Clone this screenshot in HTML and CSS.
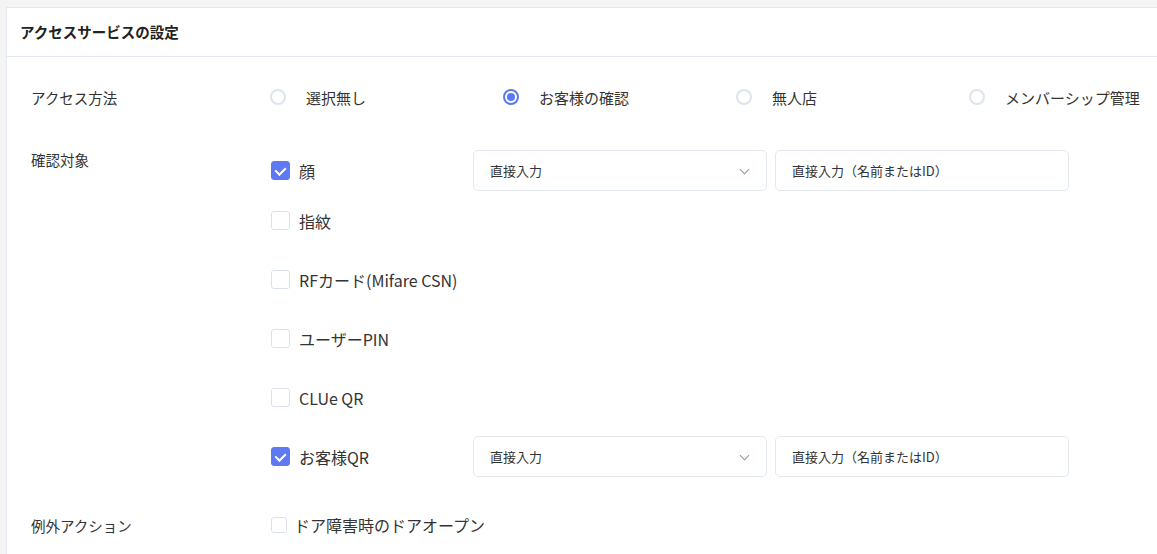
FILE: index.html
```html
<!DOCTYPE html>
<html lang="ja">
<head>
    <meta charset="UTF-8">
    <meta name="viewport" content="width=device-width, initial-scale=1.0">
    <title>アクセスサービスの設定</title>
    <link rel="stylesheet" href="styles.css">
</head>
<body>

    <!-- 設定カード -->
    <div class="card">
        <div class="card-header">アクセスサービスの設定</div>

        <div class="card-body">
            <!-- アクセス方法 -->
            <div class="form-row center first-row">
                <div class="row-label">アクセス方法</div>
                <div class="radio-group">
                    <label class="radio"><span class="radio-mark"></span>選択無し</label>
                    <label class="radio"><span class="radio-mark checked"></span>お客様の確認</label>
                    <label class="radio"><span class="radio-mark"></span>無人店</label>
                    <label class="radio"><span class="radio-mark"></span>メンバーシップ管理</label>
                </div>
            </div>

            <!-- 確認対象 -->
            <div class="form-row">
                <div class="row-label top">確認対象</div>
                <div class="check-list">
                    <div class="check-row first">
                        <label class="check"><span class="check-mark checked"></span>顔</label>
                        <div class="select-box">直接入力<span class="chevron"></span></div>
                        <div class="text-box">直接入力（名前またはID）</div>
                    </div>
                    <div class="check-row">
                        <label class="check"><span class="check-mark"></span>指紋</label>
                    </div>
                    <div class="check-row">
                        <label class="check"><span class="check-mark"></span>RFカード(Mifare CSN)</label>
                    </div>
                    <div class="check-row">
                        <label class="check"><span class="check-mark"></span>ユーザーPIN</label>
                    </div>
                    <div class="check-row">
                        <label class="check"><span class="check-mark"></span>CLUe QR</label>
                    </div>
                    <div class="check-row">
                        <label class="check"><span class="check-mark checked"></span>お客様QR</label>
                        <div class="select-box">直接入力<span class="chevron"></span></div>
                        <div class="text-box">直接入力（名前またはID）</div>
                    </div>
                </div>
            </div>

            <!-- 例外アクション -->
            <div class="form-row center last-row">
                <div class="row-label">例外アクション</div>
                <label class="check small"><span class="check-mark"></span>ドア障害時のドアオープン</label>
            </div>
        </div>
    </div>

</body>
</html>
```

FILE: styles.css
```css
html {
    overflow: hidden;
}
body {
    font-family: "Noto Sans CJK JP", "Noto Sans", sans-serif;
    background-color: #f4f4f5;
    color: #333;
    margin: 0;
    padding: 7px 0 0 6px;
}
/* カード */
.card {
    width: 1220px;
    height: 560px;
    background-color: #fff;
    border: 1px solid #e3e7ef;
    border-right: none;
}
.card-header {
    height: 48px;
    line-height: 48px;
    padding-left: 13px;
    font-size: 14.5px;
    font-weight: bold;
    color: #222;
    border-bottom: 1px solid #e3e7ef;
}
.card-body {
    padding: 20px 0 0 24px;
}
/* 行 */
.form-row {
    display: flex;
    margin-bottom: 32px;
}
.form-row.center {
    align-items: center;
    min-height: 40px;
}
.form-row.first-row {
    margin-bottom: 33px;
}
.form-row.last-row {
    margin-top: -4px;
}
.row-label {
    width: 239px;
    flex-shrink: 0;
    font-size: 14.5px;
    color: #333;
}
.row-label.top {
    line-height: 20px;
}
/* ラジオボタン */
.radio-group {
    display: flex;
}
.radio {
    width: 233px;
    display: flex;
    align-items: center;
    font-size: 15px;
    color: #333;
}
.radio-mark {
    width: 16px;
    height: 16px;
    box-sizing: border-box;
    border: 2px solid #dde4ef;
    border-radius: 50%;
    margin-right: 20px;
    position: relative;
}
.radio-mark.checked {
    border-color: #5b78f6;
}
.radio-mark.checked::after {
    content: "";
    position: absolute;
    left: 2px;
    top: 2px;
    width: 8px;
    height: 8px;
    border-radius: 50%;
    background-color: #5b78f6;
}
/* チェックボックス */
.check-list {
    display: flex;
    flex-direction: column;
    gap: 18px;
    padding-left: 1px;
}
.check-row {
    display: flex;
    align-items: center;
    height: 41px;
}
.check-row.first {
    margin-bottom: -9px;
}
.check {
    width: 202px;
    display: flex;
    align-items: center;
    font-size: 16px;
    color: #333;
}
.check-mark {
    width: 19px;
    height: 19px;
    box-sizing: border-box;
    border: 1px solid #dbe1ec;
    border-radius: 3px;
    margin-right: 9px;
    position: relative;
}
.check-mark.checked {
    background-color: #5f79f2;
    border-color: #5f79f2;
}
.check-mark.checked::after {
    content: "";
    position: absolute;
    left: 5px;
    top: 3px;
    width: 5px;
    height: 8px;
    border-right: 2px solid #fff;
    border-bottom: 2px solid #fff;
    transform: rotate(45deg);
}
.check.small {
    width: auto;
    white-space: nowrap;
    padding-left: 1px;
}
.check.small .check-mark {
    width: 16px;
    height: 16px;
    margin-right: 7px;
}
/* 入力欄 */
.select-box,
.text-box {
    width: 294px;
    height: 41px;
    box-sizing: border-box;
    border: 1px solid #e3e7ef;
    border-radius: 5px;
    padding-left: 16px;
    display: flex;
    align-items: center;
    font-size: 13px;
    color: #333;
}
.select-box {
    position: relative;
    margin-right: 8px;
}
.chevron {
    position: absolute;
    right: 18px;
    top: 15px;
    width: 6px;
    height: 6px;
    border-right: 1px solid #999;
    border-bottom: 1px solid #999;
    transform: rotate(45deg);
}
```
